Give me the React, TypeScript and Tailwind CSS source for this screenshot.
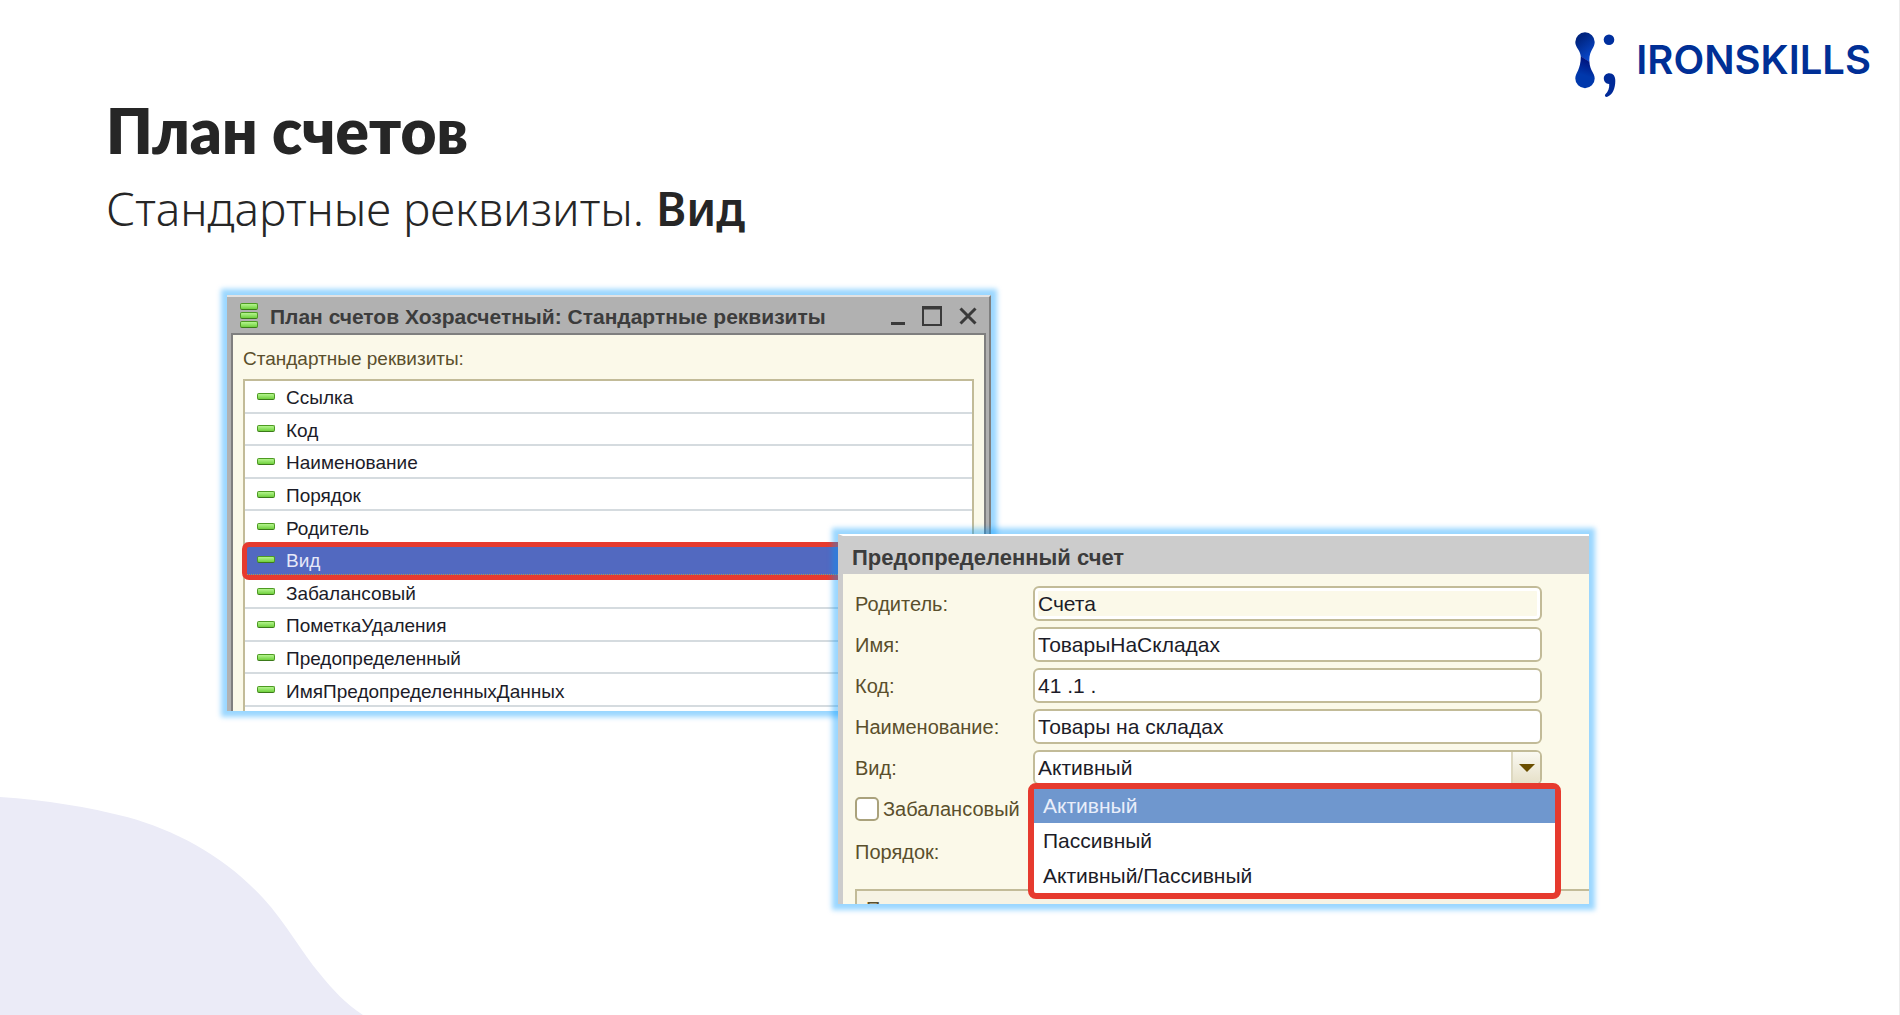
const attributes = [
  "Ссылка",
  "Код",
  "Наименование",
  "Порядок",
  "Родитель",
  "Вид",
  "Забалансовый",
  "ПометкаУдаления",
  "Предопределенный",
  "ИмяПредопределенныхДанных",
];

const kinds = ["Активный", "Пассивный", "Активный/Пассивный"];

const fields = [
  { id: "parent", label: "Родитель:", value: "Счета", readOnly: true },
  { id: "name", label: "Имя:", value: "ТоварыНаСкладах", readOnly: false },
  { id: "code", label: "Код:", value: "41 .1 .", readOnly: false },
  { id: "title", label: "Наименование:", value: "Товары на складах", readOnly: false },
];

function Bar() {
  return (
    <span className="block h-[7px] w-[18px] shrink-0 rounded-[2px] border border-[#4d9a22] border-b-[#3b7a1a] bg-linear-to-b from-[#b4f58c] to-[#6fd03a]" />
  );
}

function Logo() {
  return (
    <a href="#" className="flex gap-5 text-[#002f96]" aria-label="IRONSKILLS">
      <svg width="41" height="66" viewBox="0 0 41 66" aria-hidden="true">
        <defs>
          <linearGradient id="upper" x1="0" y1="0" x2="0.5" y2="1">
            <stop offset="0.25" stopColor="#00247f" />
            <stop offset="1" stopColor="#0848cc" />
          </linearGradient>
          <linearGradient id="lower" x1="0.6" y1="0" x2="0.4" y2="1">
            <stop offset="0.05" stopColor="#00107a" />
            <stop offset="0.6" stopColor="#0038ac" />
          </linearGradient>
        </defs>
        <path
          d="M.3 10A9.7 9.7 0 0 1 19.7 10C19.7 16 14.6 18 14.3 28L14.4 30L5.8 24.5C5 17.5 .3 15.5 .3 10Z"
          fill="url(#upper)"
        />
        <path
          d="M5.8 24.3L14.4 29.8C15 39 19.7 41 19.7 46.5A9.7 9.7 0 0 1 .3 46.5C.3 41 5.8 38 5.8 24.3Z"
          fill="url(#lower)"
        />
        <circle cx="34" cy="7.8" r="5.3" fill="#002f9e" />
        <path
          d="M28.8 46.5C28.8 43.5 31.2 41.3 34.3 41.3C38.3 41.3 40.3 44.2 40.3 49C40.3 56.5 37.5 62.8 32.4 64.8C30.4 65.4 29.2 63.6 30.4 62.2C33 59.5 34.6 56 34.2 51.9C31 52 28.8 49.6 28.8 46.5Z"
          fill="#002a98"
        />
      </svg>
      <span className="mt-2 font-[Inter,sans-serif] text-[40px] leading-[40px] font-semibold">IRONSKILLS</span>
    </a>
  );
}

function AttributesWindow() {
  return (
    <section className="col-start-2 col-end-4 row-start-1 self-start border-t-2 border-r-2 border-t-[#e2e2e2] border-r-[#7f7f7f] bg-[#b1b1b1] pr-[3px] pl-1 shadow-[0_0_5px_6px_rgba(5,155,255,0.4)]">
      <header className="flex h-9 items-center px-[9px]">
        <span className="flex flex-col gap-[2px]">
          <Bar />
          <Bar />
          <Bar />
        </span>
        <h2 className="mt-1 ml-3 flex-1 text-[21px] leading-6 font-bold whitespace-nowrap text-[#3c3c3c]">
          План счетов Хозрасчетный: Стандартные реквизиты
        </h2>
        <div className="flex gap-[17px] pt-[2px]">
          <button type="button" aria-label="Свернуть">
            <svg width="18" height="20" viewBox="0 0 18 20"><path d="M4 17.5H18" stroke="#3a3a3a" strokeWidth="3" /></svg>
          </button>
          <button type="button" aria-label="Развернуть">
            <svg width="20" height="20" viewBox="0 0 20 20" fill="none" stroke="#3a3a3a">
              <rect x="1" y="1" width="18" height="18" strokeWidth="2" />
              <path d="M1 2H19" strokeWidth="3" />
            </svg>
          </button>
          <button type="button" aria-label="Закрыть">
            <svg width="18" height="20" viewBox="0 0 18 20"><path d="M1.5 2.5L16.5 17.5M16.5 2.5L1.5 17.5" stroke="#3a3a3a" strokeWidth="3" /></svg>
          </button>
        </div>
      </header>
      <div className="border-x-2 border-t-2 border-[#7f7f7f] bg-[#fbf9e9] px-[10px]">
        <h3 className="flex h-11 items-center pt-1 text-[19px] text-[#5a4f2c]">Стандартные реквизиты:</h3>
        <div className="border-x-2 border-t-2 border-[#c2bb98] bg-white">
          <ul className="grid h-[326px] grid-rows-10">
            {attributes.map((name) => {
              const selected = name === "Вид";
              return (
                <li
                  key={name}
                  className={
                    selected
                      ? "relative flex items-center gap-[11px] border-b-2 border-[#5269c0] bg-[#5269c0] pl-3 text-[19px] text-[#e6e8f8]"
                      : "flex items-center gap-[11px] border-b-2 border-[#d5dbdf] pl-3 text-[19px] text-[#1c1c28]"
                  }
                >
                  <Bar />
                  <span className="pt-1 leading-6">{name}</span>
                  {selected && (
                    <span className="absolute -inset-x-[3px] -top-[2px] -bottom-[5px] rounded-[7px] border-[5px] border-[#e63a2e]">
                      <span className="absolute inset-x-0 bottom-0 border-b border-dotted border-[#b09a50]" />
                    </span>
                  )}
                </li>
              );
            })}
          </ul>
          <div className="h-1" />
        </div>
      </div>
    </section>
  );
}

function AccountWindow() {
  return (
    <section className="relative col-start-3 col-end-5 row-start-1 mt-[239px] self-start border-t-2 border-l-[5px] border-t-white border-l-[#cccccc] bg-[#fbf9e9] text-[20px] text-[#5a4f2c] shadow-[0_0_5px_6px_rgba(5,155,255,0.4)]">
      <h2 className="flex h-[38px] items-center bg-[#cccccc] pt-1 pl-[9px] text-[22px] font-bold text-[#3c3c3c]">
        Предопределенный счет
      </h2>
      <form className="pt-3 pl-3">
        <div className="grid grid-cols-[178px_minmax(0,1fr)] gap-y-[6px] pr-[47px]">
          {fields.map((f) => (
            <div key={f.id} className="col-span-2 grid grid-cols-subgrid items-center">
              <label htmlFor={f.id}>{f.label}</label>
              <input
                id={f.id}
                defaultValue={f.value}
                readOnly={f.readOnly}
                className={
                  f.readOnly
                    ? "h-[35px] w-full rounded-md border-2 border-[#c2bb98] bg-[#fbf9e9] pl-[3px] text-[21px] text-[#1c1c28] shadow-[inset_0_0_0_3px_#fff]"
                    : "h-[35px] w-full rounded-md border-2 border-[#c2bb98] bg-white pl-[3px] text-[21px] text-[#1c1c28]"
                }
              />
            </div>
          ))}
          <label htmlFor="kind" className="self-center">Вид:</label>
          <div className="relative text-[21px]">
            <div className="flex h-[35px] overflow-hidden rounded-md border-2 border-[#c2bb98] bg-white">
              <select id="kind" defaultValue="Активный" className="min-w-0 flex-1 appearance-none pl-[3px] text-[#1c1c28]">
                {kinds.map((k) => (
                  <option key={k}>{k}</option>
                ))}
              </select>
              <span className="flex w-[29px] items-center justify-center border-l-2 border-[#ddd8c0] bg-linear-to-b from-[#faf9f2] to-[#e6e0c8]">
                <svg width="16" height="8" viewBox="0 0 16 8"><path d="M0 0H16L8 8Z" fill="#6b4f00" /></svg>
              </span>
            </div>
            <ul
              role="listbox"
              aria-label="Вид"
              className="absolute top-[33px] -right-[19px] -left-[5px] rounded-lg border-[6px] border-[#e63a2e] bg-white text-[#1c1c28]"
            >
              {kinds.map((k, i) => (
                <li
                  key={k}
                  role="option"
                  aria-selected={i === 0}
                  className={
                    i === 0
                      ? "flex h-[34px] items-center bg-[#6f97ce] pl-[9px] text-[#e9eefa]"
                      : "flex h-[35px] items-center pl-[9px]"
                  }
                >
                  {k}
                </li>
              ))}
            </ul>
          </div>
          <div className="flex h-[35px] items-center gap-1 whitespace-nowrap">
            <input
              id="offbalance"
              type="checkbox"
              className="size-6 shrink-0 appearance-none rounded-[5px] border-2 border-[#aaa27c] bg-white"
            />
            <label htmlFor="offbalance">Забалансовый</label>
          </div>
          <div className="col-start-1 flex h-[39px] items-center">Порядок:</div>
        </div>
        <div className="mt-[18px] h-[15px] overflow-hidden border-t-2 border-l-2 border-[#c2bb98] bg-[#f6f3e4] pt-1 pl-[9px] leading-7">
          П
        </div>
      </form>
    </section>
  );
}

export default function App() {
  return (
    <main className="relative flex min-h-screen flex-col overflow-hidden border-r border-[#ececec] bg-white font-['Liberation_Sans',Arial,sans-serif]">
      <svg className="absolute bottom-0 left-0" width="363" height="218" viewBox="0 0 363 218" aria-hidden="true">
        <path d="M0 0C46 3 88 10 127 20C178 34 225 60 263 101C286 126 302 156 320 177C334 194 345 206 363 218H0Z" fill="#ebebf7" />
      </svg>
      <header className="flex justify-end pt-8 pr-7">
        <Logo />
      </header>
      <div className="pt-[2px] pl-[106px] text-[#262626]">
        <h1 className="font-[Lato,sans-serif] text-[62px] leading-[60px] font-extrabold">План счетов</h1>
        <p className="mt-[18px] font-['Noto_Sans',sans-serif] text-[46px] leading-[60px] font-light">
          Стандартные реквизиты. <strong className="font-semibold">Вид</strong>
        </p>
      </div>
      <div className="mt-[57px] grid grid-cols-[227fr_611fr_153fr_598fr_310fr]">
        <AttributesWindow />
        <AccountWindow />
      </div>
    </main>
  );
}
